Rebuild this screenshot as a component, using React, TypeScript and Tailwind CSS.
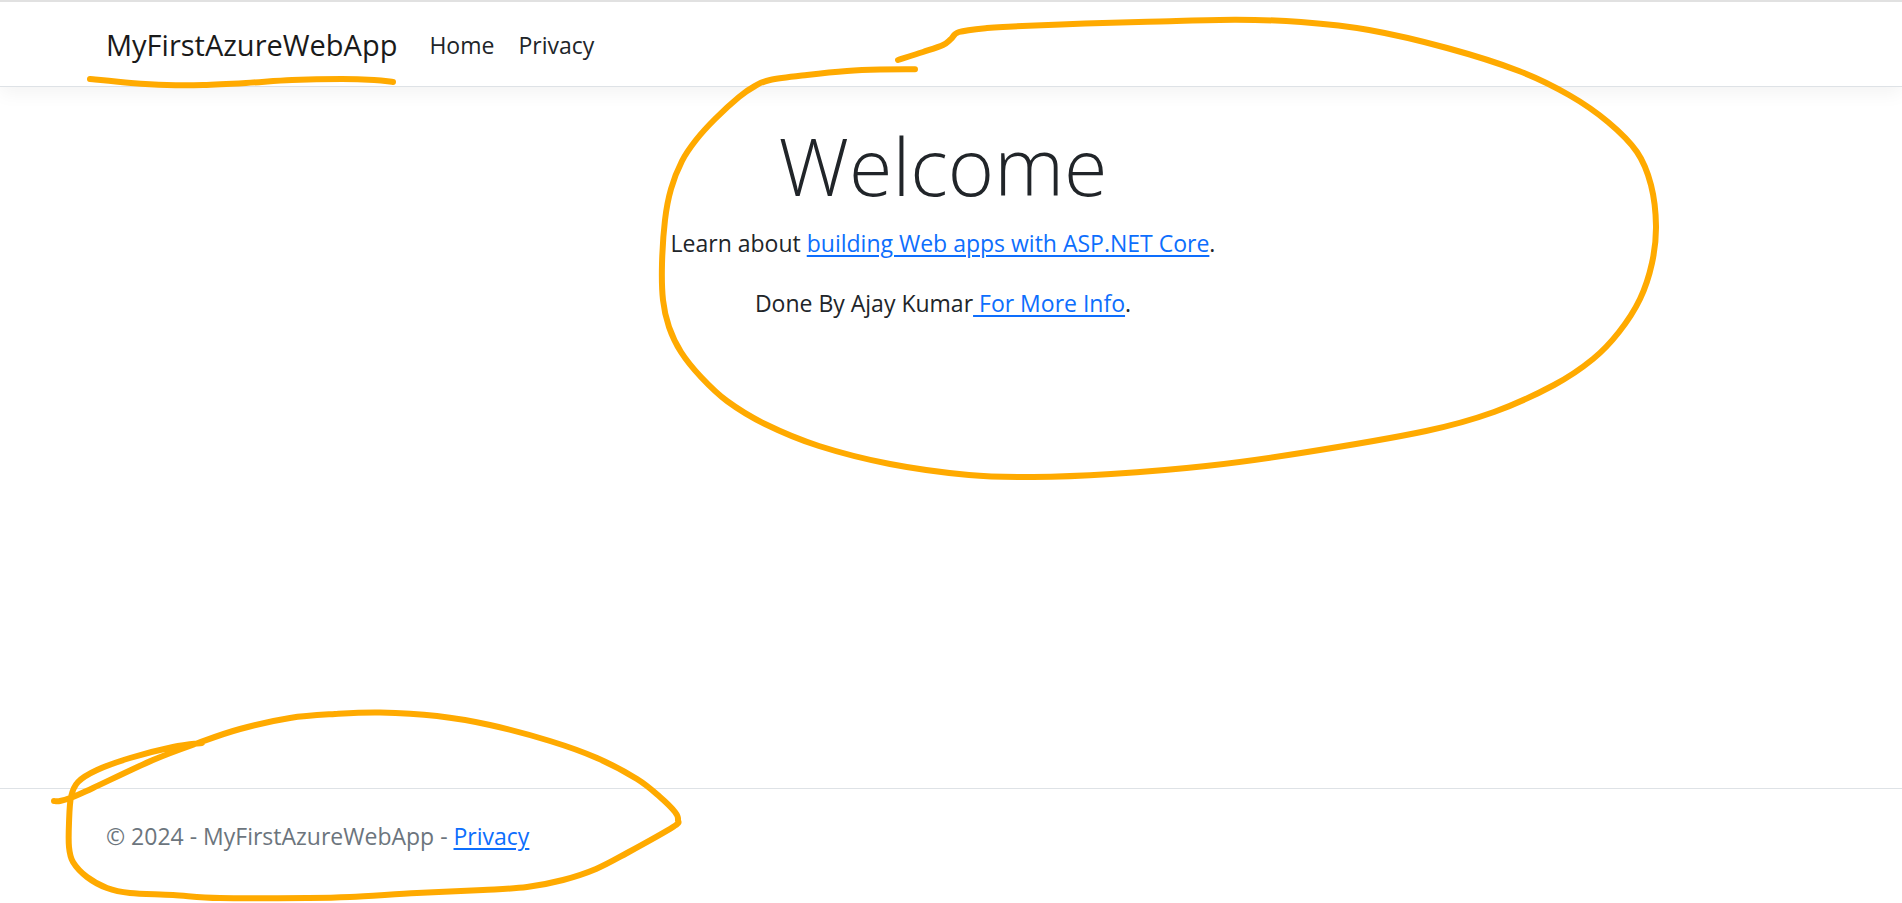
import type { ReactNode } from "react";

type Point = [number, number];

const brandUnderline: Point[] = [
  [90, 79], [131, 83], [167, 85], [203, 85], [246, 83], [292, 80], [342, 79], [374, 80], [393, 82],
];

const welcomeLoop: Point[] = [
  [898, 60], [923, 52], [943, 45], [951, 39], [959, 32], [987, 28], [1013, 26.5], [1085, 23.5], [1160, 21.5],
  [1236, 19.7], [1301, 22], [1369, 30], [1447, 48], [1519, 71], [1569, 95], [1608, 122], [1637, 152],
  [1651, 185], [1656, 226], [1652, 263], [1640, 299], [1619, 332], [1593, 359], [1554, 385], [1494, 412],
  [1426, 431], [1301, 453], [1206, 466], [1111, 474], [1033, 477], [969, 475], [890, 464], [819, 446],
  [765, 424], [727, 401], [701, 377], [681, 352], [669, 327], [663, 300], [662, 264], [665, 220],
  [671, 189], [682, 161], [696, 140], [715, 119], [739, 97], [755, 86], [770, 80], [807, 75], [847, 71],
  [880, 69.5], [915, 69.3],
];

const footerLoop: Point[] = [
  [54, 801], [60, 801], [73, 797], [93, 788], [153, 760], [198, 743], [240, 729], [290, 718],
  [335, 714], [380, 712.5], [437, 716], [490, 725], [550, 741], [597, 758], [637, 779], [660, 797],
  [675, 812], [678, 820], [673, 827], [627, 853], [596, 869], [563, 880], [527, 887], [483, 890],
  [417, 893], [350, 897], [307, 898], [220, 898], [173, 895], [130, 893], [107, 888], [87, 877],
  [73, 862], [69, 847], [69, 823], [71, 797], [78, 782], [97, 770], [130, 758], [173, 747], [202, 743],
];

// Smooth curve through every point (Catmull-Rom converted to cubic segments).
function smoothPath(points: Point[]): string {
  let d = `M${points[0][0]} ${points[0][1]}`;
  for (let i = 0; i < points.length - 1; i++) {
    const p0 = points[Math.max(i - 1, 0)];
    const p1 = points[i];
    const p2 = points[i + 1];
    const p3 = points[Math.min(i + 2, points.length - 1)];
    d += `C${p1[0] + (p2[0] - p0[0]) / 6} ${p1[1] + (p2[1] - p0[1]) / 6} ${p2[0] - (p3[0] - p1[0]) / 6} ${
      p2[1] - (p3[1] - p1[1]) / 6
    } ${p2[0]} ${p2[1]}`;
  }
  return d;
}

function Container({ children }: { children: ReactNode }) {
  return (
    <div className="pr-4">
      <div className="mx-auto w-full max-w-[1710px] px-[18px]">{children}</div>
    </div>
  );
}

function TextLink({ children }: { children: ReactNode }) {
  return (
    <a href="#" className="text-[#0d6efd] underline decoration-2 underline-offset-3">
      {children}
    </a>
  );
}

function Annotations() {
  return (
    <svg
      className="pointer-events-none absolute top-0 left-0"
      width="1902"
      height="903"
      viewBox="0 0 1902 903"
      fill="none"
      stroke="#ffaa00"
      strokeWidth="6"
      strokeLinecap="round"
      strokeLinejoin="round"
      aria-hidden="true"
    >
      <path d={smoothPath(brandUnderline)} />
      <path d={smoothPath(welcomeLoop)} />
      <path d={smoothPath(footerLoop)} />
    </svg>
  );
}

export default function App() {
  return (
    <div className="relative flex min-h-screen flex-col overflow-hidden bg-white font-['Open_Sans','Noto_Sans',sans-serif] text-[23px] leading-9 text-[#212529]">
      <header className="border-t-2 border-b border-t-[#e1e1e1] border-b-[#dee2e6] bg-white shadow-[0_6px_18px_rgba(0,0,0,0.05)]">
        <Container>
          <nav className="flex h-[84px] items-center gap-8 pt-0.5">
            <a href="#" className="text-[29px] text-[#1a1a1a]">MyFirstAzureWebApp</a>
            <div className="flex gap-6">
              <a href="#">Home</a>
              <a href="#">Privacy</a>
            </div>
          </nav>
        </Container>
      </header>

      <main className="flex-1 pt-9 text-center">
        <Container>
          <h1 className="mb-4 text-[79px] leading-[86px] font-light">Welcome</h1>
          <p className="mb-6">
            Learn about <TextLink>building Web apps with ASP.NET Core</TextLink>.
          </p>
          <p>
            Done By Ajay Kumar<TextLink> For More Info</TextLink>.
          </p>
        </Container>
      </main>

      <footer className="border-t border-[#dee2e6] pt-0.5 pb-[22px] leading-[90px] text-[#6c757d]">
        <Container>
          © 2024 - MyFirstAzureWebApp - <TextLink>Privacy</TextLink>
        </Container>
      </footer>

      <Annotations />
    </div>
  );
}
